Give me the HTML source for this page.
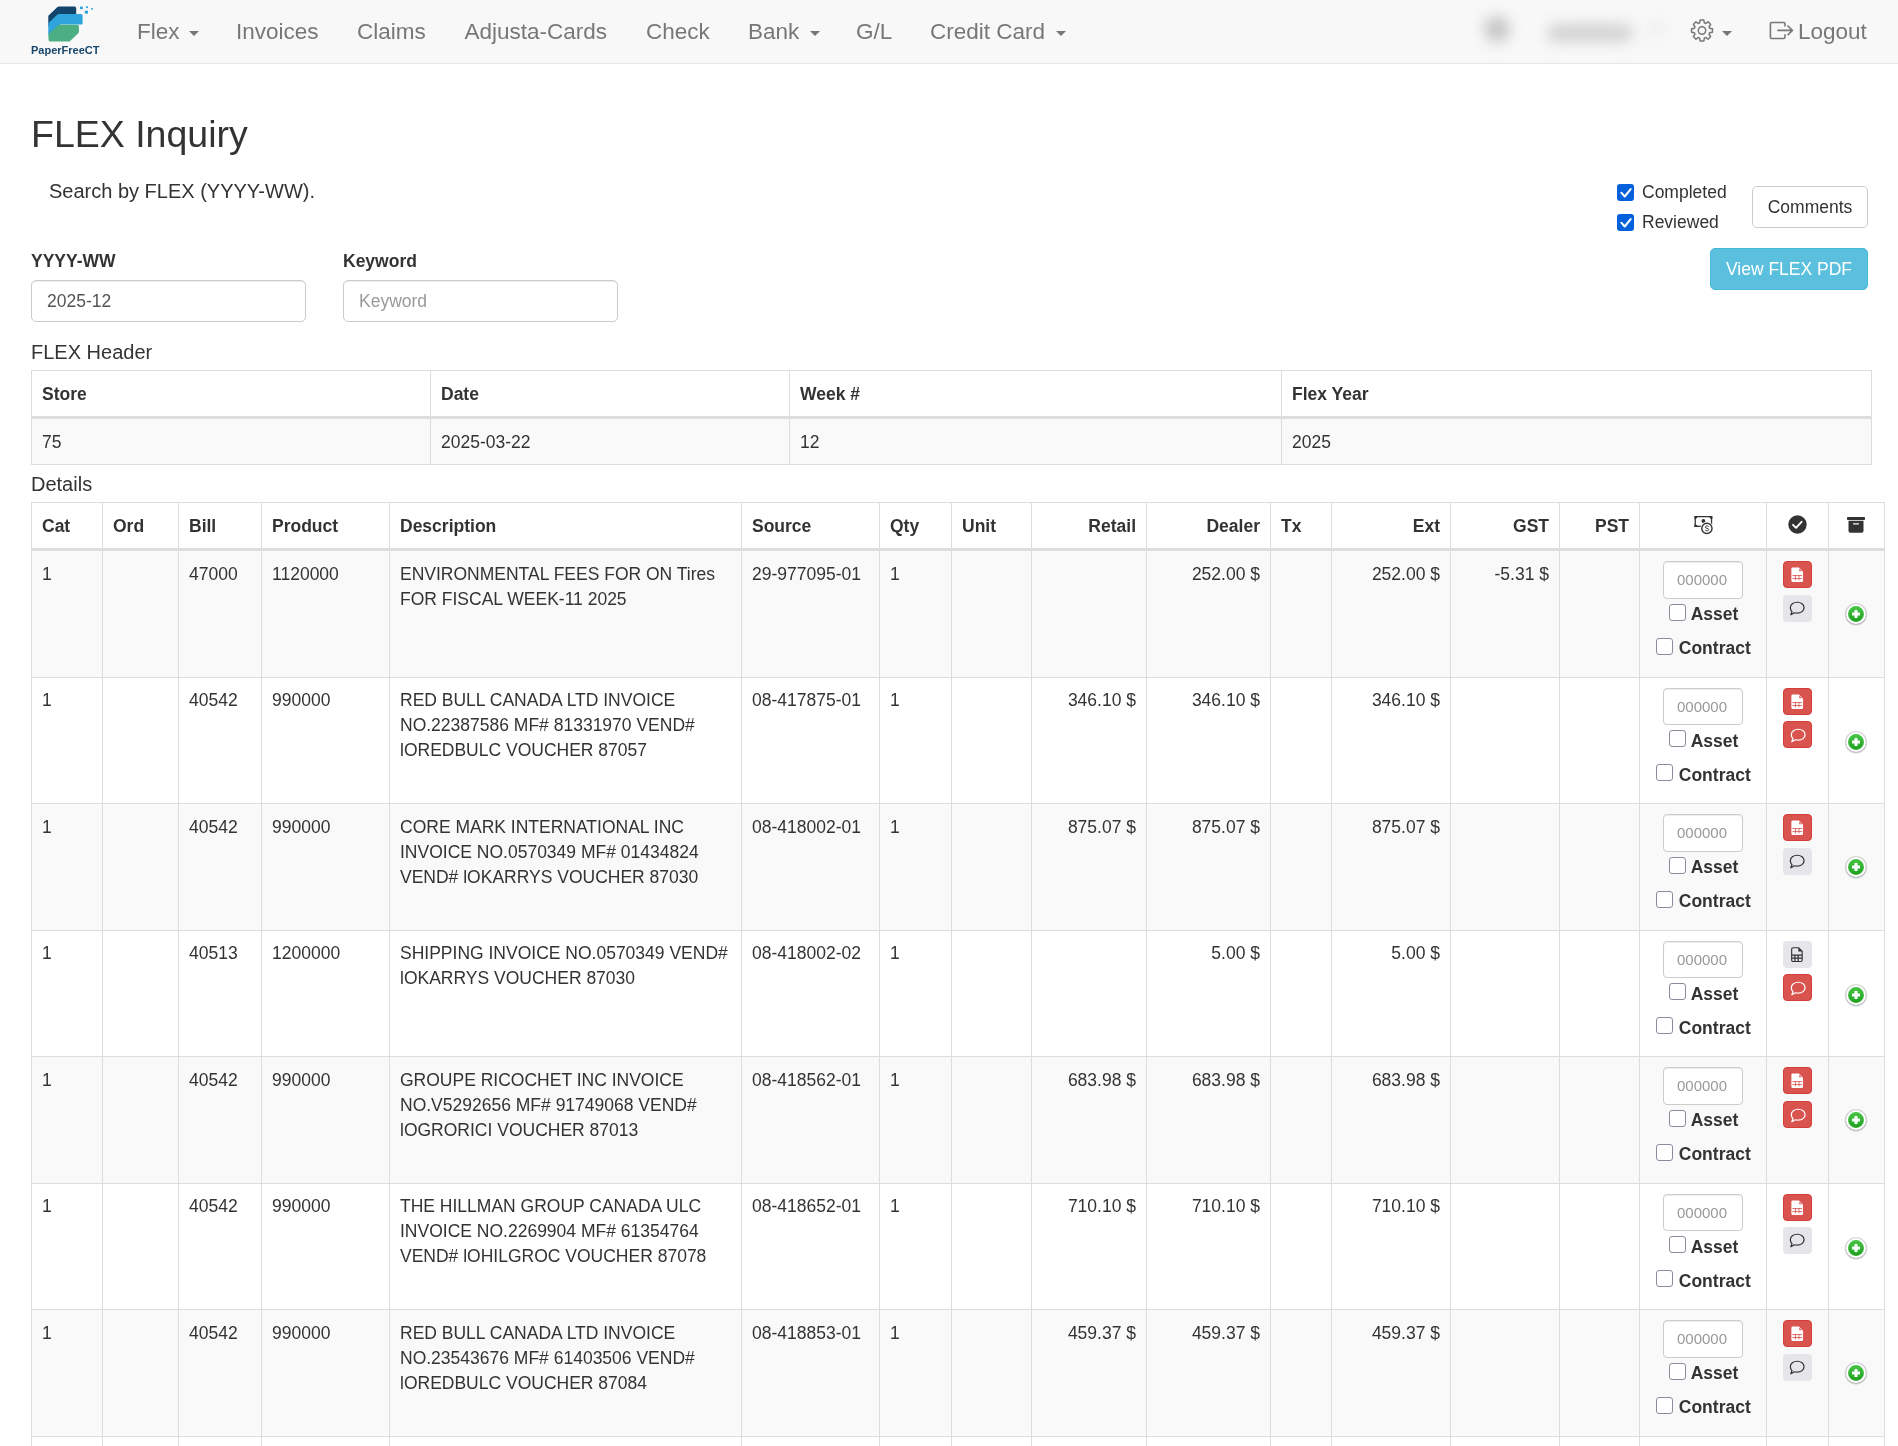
<!DOCTYPE html>
<html><head><meta charset="utf-8">
<style>
*{box-sizing:border-box}
html,body{margin:0;padding:0;background:#fff;width:1898px;height:1446px;overflow:hidden}
body{font-family:"Liberation Sans",sans-serif;color:#333;position:relative;will-change:transform}
.abs{position:absolute;white-space:nowrap}
#nav{position:absolute;left:0;top:0;width:1898px;height:64px;background:#f8f8f8;border-bottom:1px solid #e7e7e7}
.nl{position:absolute;top:0;height:63px;line-height:63px;font-size:22.5px;color:#777;white-space:nowrap}
.caret{display:inline-block;width:0;height:0;border-top:5px solid #777;border-left:5px solid transparent;border-right:5px solid transparent;vertical-align:middle;position:absolute}
h2{position:absolute;margin:0;left:31px;top:114px;font-size:37.5px;font-weight:500;line-height:41px;white-space:nowrap}
.lbl{position:absolute;font-weight:bold;font-size:17.5px;line-height:25px;white-space:nowrap}
.inp{position:absolute;height:42px;border:1px solid #ccc;border-radius:5px;background:#fff;box-shadow:inset 0 1px 1px rgba(0,0,0,.075);font-size:17.5px;line-height:41px;padding-left:15px;color:#555;white-space:nowrap}
table{border-collapse:collapse;position:absolute;table-layout:fixed;font-size:17.5px;line-height:25px}
td,th{border:1px solid #ddd;padding:10px;vertical-align:top;text-align:left;white-space:nowrap;overflow:visible}
thead th{border-bottom:3px solid #ddd;padding-top:11px;padding-bottom:9px}
#ht td{padding-top:11px;padding-bottom:9px}
tbody tr:nth-child(odd){background:#f9f9f9}
.r{text-align:right}
.sec{position:absolute;left:31px;font-size:20px;line-height:28px;white-space:nowrap}
.c{text-align:center}
#dt td{padding-top:11px}
#dt td.x{position:relative;padding:0}
.ic{position:absolute}
#dt th{position:relative}
.ip{position:absolute;left:23px;top:10px;width:79.5px;height:38px;border:1px solid #ccc;border-radius:4px;background:#fff;box-shadow:inset 0 1px 1px rgba(0,0,0,.075);color:#999;font-size:15px;line-height:36px;padding-left:13px}
.cb{position:absolute;width:17px;height:17px;border:1px solid #8b8b9c;border-radius:3px;background:#fff}
.cbl{position:absolute;font-weight:bold;font-size:17.5px;line-height:25px}
.bt{position:absolute;left:15.5px;width:29px;height:27px;border-radius:4px}
.bt.red{background:#d9534f;border:1px solid #d43f3a}
.bt.gray{background:#e6e6ea}
#dt tr.ev td{padding-top:10px}
#dt tr.ev td.x{padding:0}
#dt tr.ev .ip{height:37px;line-height:35px}
#dt tr.ev .cb{margin-top:-1px}
#dt tr.ev .bt+.bt{margin-top:-1px}
#dt tr.ev .ic{margin-top:0.5px}
</style></head><body>
<div id="nav">
  <div class="nl" style="left:137px">Flex<span class="caret" style="left:52px;top:31px"></span></div>
  <div class="nl" style="left:236px">Invoices</div>
  <div class="nl" style="left:357px">Claims</div>
  <div class="nl" style="left:464.5px">Adjusta-Cards</div>
  <div class="nl" style="left:646px">Check</div>
  <div class="nl" style="left:748px">Bank<span class="caret" style="left:61.5px;top:31px"></span></div>
  <div class="nl" style="left:856px">G/L</div>
  <div class="nl" style="left:930px">Credit Card<span class="caret" style="left:125.5px;top:31px"></span></div>
  <div class="nl" style="left:1798px">Logout</div>
  <svg style="position:absolute;left:44px;top:2px" width="52" height="42" viewBox="0 0 52 42">
    <path d="M4.3 13.8l8.9-8.5c.6-.5 1.2-.8 2-.8h15.4a1.6 1.6 0 0 1 1.6 1.6v8.3h-17.2l-10.7 10z" fill="#12456c"/>
    <path d="M4.3 21.3l8.9-8.6c.6-.5 1.2-.8 2-.8h21.8a1.6 1.6 0 0 1 1.6 1.6v7.4c0 .9-.7 1.7-1.6 1.7h-20.8l-11.9 10.8z" fill="#2ea3dc"/>
    <path d="M4.3 32.3l9.6-8.8c.5-.4 1-.7 1.7-.7h17.7a1.6 1.6 0 0 1 1.6 1.6v5.3c0 .6-.2 1.1-.6 1.5l-8.2 7.7c-.4.4-1 .7-1.6.7h-18.3a1.6 1.6 0 0 1-1.6-1.6z" fill="#4caf84"/>
    <rect x="36" y="4.6" width="2.8" height="2.6" fill="#2ea3dc"/>
    <rect x="42" y="4.3" width="1.9" height="1.8" fill="#2ea3dc"/>
    <rect x="47.2" y="6" width="1.7" height="1.6" fill="#2ea3dc"/>
    <rect x="40.8" y="8.7" width="3.2" height="2.9" fill="#2ea3dc"/>
  </svg>
  <div style="position:absolute;left:31px;top:42.5px;font-size:11px;line-height:14px;font-weight:bold;color:#17476c;letter-spacing:0;white-space:nowrap">PaperFreeCT</div>
  <div style="position:absolute;left:1465px;top:0px;width:230px;height:63px;filter:blur(7px)">
    <div style="position:absolute;left:19px;top:16px;width:26px;height:26px;border-radius:50%;background:#c6c6c6"></div>
    <div style="position:absolute;left:55px;top:21px;width:26px;height:10px;border-radius:5px;background:#fafafa"></div>
    <div style="position:absolute;left:82px;top:24px;width:86px;height:18px;border-radius:9px;background:#d2d2d2"></div>
    <div style="position:absolute;left:184px;top:22px;width:16px;height:14px;border-radius:7px;background:#ececec"></div>
  </div>
  <svg style="position:absolute;left:1689px;top:18px" width="26" height="25" viewBox="0 0 26 25"><path d="M10.66 4.85L11.16 2.06L14.84 2.06L15.34 4.85L16.76 5.44L19.08 3.82L21.68 6.42L20.06 8.74L20.65 10.16L23.44 10.66L23.44 14.34L20.65 14.84L20.06 16.26L21.68 18.58L19.08 21.18L16.76 19.56L15.34 20.15L14.84 22.94L11.16 22.94L10.66 20.15L9.24 19.56L6.92 21.18L4.32 18.58L5.94 16.26L5.35 14.84L2.56 14.34L2.56 10.66L5.35 10.16L5.94 8.74L4.32 6.42L6.92 3.82L9.24 5.44Z" fill="none" stroke="#777" stroke-width="1.5" stroke-linejoin="round"/><circle cx="13" cy="12.5" r="3.7" fill="none" stroke="#777" stroke-width="1.5"/></svg>
  <span class="caret" style="left:1721.7px;top:31px"></span>
  <svg style="position:absolute;left:1768px;top:20px" width="26" height="21" viewBox="0 0 26 21"><path d="M17 6.5v-2.6a1.4 1.4 0 0 0-1.4-1.4h-11.8a1.4 1.4 0 0 0-1.4 1.4v13.2a1.4 1.4 0 0 0 1.4 1.4h11.8a1.4 1.4 0 0 0 1.4-1.4v-2.8" fill="none" stroke="#777" stroke-width="1.6"/><path d="M9.3 10.4h15M19.5 5.5l4.9 4.9-4.9 4.9" fill="none" stroke="#777" stroke-width="1.6"/></svg>

</div>
<h2>FLEX Inquiry</h2>
<div class="abs" style="left:49px;top:177px;font-size:20px;line-height:28px">Search by FLEX (YYYY-WW).</div>
<div class="lbl" style="left:31px;top:249px">YYYY-WW</div>
<div class="inp" style="left:31px;top:280px;width:275px">2025-12</div>
<div class="lbl" style="left:343px;top:249px">Keyword</div>
<div class="inp" style="left:343px;top:280px;width:275px;color:#999">Keyword</div>


<div style="position:absolute;left:1617px;top:184px;width:17px;height:17px;border-radius:3px;background:#0560dc"><svg width="17" height="17" viewBox="0 0 17 17" style="position:absolute;left:0;top:0"><path d="M4.3 8.7l3.4 3.8 6-7.4" fill="none" stroke="#fff" stroke-width="2" stroke-linecap="round" stroke-linejoin="round"/></svg></div>
<div style="position:absolute;left:1617px;top:214px;width:17px;height:17px;border-radius:3px;background:#0560dc"><svg width="17" height="17" viewBox="0 0 17 17" style="position:absolute;left:0;top:0"><path d="M4.3 8.7l3.4 3.8 6-7.4" fill="none" stroke="#fff" stroke-width="2" stroke-linecap="round" stroke-linejoin="round"/></svg></div>
<div class="abs" style="left:1642px;top:180px;font-size:17.5px;line-height:25px">Completed</div>
<div class="abs" style="left:1642px;top:210px;font-size:17.5px;line-height:25px">Reviewed</div>
<div class="abs" style="left:1752px;top:186px;width:116px;height:41.5px;border:1px solid #ccc;border-radius:5px;background:#fff;font-size:17.5px;line-height:41px;text-align:center;color:#333">Comments</div>
<div class="abs" style="left:1710px;top:248.3px;width:158px;height:41.5px;border:1px solid #46b8da;border-radius:5px;background:#5bc0de;font-size:17.5px;line-height:41px;text-align:center;color:#fff">View FLEX PDF</div>
<div class="sec" style="top:338px">FLEX Header</div>
<div class="sec" style="top:470px">Details</div>

<table id="ht" style="left:31px;top:370px;width:1840px">
<colgroup><col style="width:399px"><col style="width:359px"><col style="width:492px"><col style="width:590px"></colgroup>
<thead><tr><th>Store</th><th>Date</th><th>Week #</th><th>Flex Year</th></tr></thead>
<tbody><tr><td>75</td><td>2025-03-22</td><td>12</td><td>2025</td></tr></tbody>
</table>

<!--DT-->
<table id="dt" style="left:31px;top:502px;width:1853px">
<colgroup><col style="width:71px"><col style="width:76px"><col style="width:83px"><col style="width:128px"><col style="width:352px"><col style="width:138px"><col style="width:72px"><col style="width:80px"><col style="width:115px"><col style="width:124px"><col style="width:61px"><col style="width:119px"><col style="width:109px"><col style="width:80px"><col style="width:127px"><col style="width:62px"><col style="width:56px"></colgroup>
<thead><tr>
<th>Cat</th>
<th>Ord</th>
<th>Bill</th>
<th>Product</th>
<th>Description</th>
<th>Source</th>
<th>Qty</th>
<th>Unit</th>
<th class="r">Retail</th>
<th class="r">Dealer</th>
<th>Tx</th>
<th class="r">Ext</th>
<th class="r">GST</th>
<th class="r">PST</th>
<th class="c"><svg class="ic" style="left:53.5px;top:11.5px" width="22" height="22" viewBox="0 0 22 22"><defs><clipPath id="bc"><rect x="0.4" y="1" width="18" height="11.1"/></clipPath></defs><g clip-path="url(#bc)"><rect x="1.15" y="1.5" width="16.5" height="9.9" fill="none" stroke="#333" stroke-width="1.5"/><circle cx="0.6" cy="1" r="2.9" fill="#333"/><circle cx="18.2" cy="1" r="2.9" fill="#333"/><circle cx="0.6" cy="12.1" r="2.9" fill="#333"/></g><circle cx="9.4" cy="6" r="1.9" fill="#333"/><circle cx="12.9" cy="13.4" r="6.6" fill="#fff"/><circle cx="12.9" cy="13.4" r="5.1" fill="#fff" stroke="#333" stroke-width="1.4"/><path d="M14.6 11.6c-.4-.5-1-.7-1.7-.7-.9 0-1.6.5-1.6 1.2 0 1.5 3.4.9 3.4 2.5 0 .7-.7 1.2-1.7 1.2-.8 0-1.4-.3-1.8-.8" fill="none" stroke="#333" stroke-width="0.95"/></svg></th>
<th class="c"><svg class="ic" style="left:21px;top:12.2px" width="19" height="19" viewBox="0 0 19 19"><circle cx="9.5" cy="9.5" r="9.2" fill="#333"/><path d="M5 9.8l3 3 5.6-6" fill="none" stroke="#fff" stroke-width="1.9" stroke-linecap="round" stroke-linejoin="round"/></svg></th>
<th class="c"><svg class="ic" style="left:17.5px;top:13px" width="19" height="17" viewBox="0 0 19 17"><rect x="0" y="1" width="18" height="3" rx="0.8" fill="#333"/><path d="M1.5 4.8h15v10.2a1.8 1.8 0 0 1-1.8 1.8h-11.4a1.8 1.8 0 0 1-1.8-1.8z" fill="#333"/><rect x="6" y="7.2" width="6" height="1.3" rx="0.6" fill="#fff"/></svg></th>
</tr></thead><tbody>
<tr style="height:128px">
<td>1</td>
<td></td>
<td>47000</td>
<td>1120000</td>
<td>ENVIRONMENTAL FEES FOR ON Tires<br>FOR FISCAL WEEK-11 2025</td>
<td>29-977095-01</td>
<td>1</td>
<td></td>
<td class="r"></td>
<td class="r">252.00 $</td>
<td></td>
<td class="r">252.00 $</td>
<td class="r">-5.31 $</td>
<td class="r"></td>
<td class="x"><div class="ip">000000</div><div class="cb" style="left:28.7px;top:53px"></div><div class="cbl" style="left:50.7px;top:51px">Asset</div><div class="cb" style="left:16.3px;top:87px"></div><div class="cbl" style="left:38.8px;top:85px">Contract</div></td>
<td class="x"><div class="bt red" style="top:10px"><svg width="12.5" height="15.4" viewBox="0 0 13 16" style="position:absolute;left:7.6px;top:5.1px"><path d="M1.8 0.6h6.4l4.3 4.3v9.3a1.4 1.4 0 0 1-1.4 1.4h-9.3a1.4 1.4 0 0 1-1.4-1.4v-12.2a1.4 1.4 0 0 1 1.4-1.4z" fill="#fff"/><path d="M8.6 1.8l2.7 2.7h-2.7z" fill="#d9534f"/><path d="M1.4 8.9h10.2M1.4 12h10.2M4.6 8.3v5.6M8.3 8.3v5.6" stroke="#d9534f" stroke-width="0.85"/></svg></div><div class="bt gray" style="top:44px"><svg width="16.5" height="15.5" viewBox="0 0 16 15" style="position:absolute;left:6px;top:6px"><path d="M8 1.2c3.6 0 6.6 2.3 6.6 5.3s-3 5.3-6.6 5.3c-.9 0-1.8-.15-2.6-.4l-3.6 1.9 1.1-2.9c-1-.95-1.6-2.2-1.6-3.9 0-3 3-5.3 6.7-5.3z" fill="none" stroke="#333" stroke-width="1.2" stroke-linejoin="round"/></svg></div></td>
<td class="x"><svg class="ic" style="left:15.4px;top:51.3px" width="24" height="24" viewBox="0 0 23 23"><defs><linearGradient id="gg" x1="0" y1="0" x2="0" y2="1"><stop offset="0" stop-color="#47c447"/><stop offset="1" stop-color="#1fa11f"/></linearGradient><radialGradient id="sh"><stop offset="0.75" stop-color="#000" stop-opacity="0.42"/><stop offset="1" stop-color="#000" stop-opacity="0"/></radialGradient></defs><circle cx="11.5" cy="11.8" r="11.3" fill="url(#sh)"/><circle cx="11.5" cy="11.5" r="9.6" fill="#fff"/><circle cx="11.5" cy="11.5" r="7.6" fill="url(#gg)"/><path d="M11.5 7.7v7.6M7.7 11.5h7.6" stroke="#fff" stroke-width="2.8"/></svg></td>
</tr>
<tr style="height:126px" class="ev">
<td>1</td>
<td></td>
<td>40542</td>
<td>990000</td>
<td>RED BULL CANADA LTD INVOICE<br>NO.22387586 MF# 81331970 VEND#<br>lOREDBULC VOUCHER 87057</td>
<td>08-417875-01</td>
<td>1</td>
<td></td>
<td class="r">346.10 $</td>
<td class="r">346.10 $</td>
<td></td>
<td class="r">346.10 $</td>
<td class="r"></td>
<td class="r"></td>
<td class="x"><div class="ip">000000</div><div class="cb" style="left:28.7px;top:53px"></div><div class="cbl" style="left:50.7px;top:51px">Asset</div><div class="cb" style="left:16.3px;top:87px"></div><div class="cbl" style="left:38.8px;top:85px">Contract</div></td>
<td class="x"><div class="bt red" style="top:10px"><svg width="12.5" height="15.4" viewBox="0 0 13 16" style="position:absolute;left:7.6px;top:5.1px"><path d="M1.8 0.6h6.4l4.3 4.3v9.3a1.4 1.4 0 0 1-1.4 1.4h-9.3a1.4 1.4 0 0 1-1.4-1.4v-12.2a1.4 1.4 0 0 1 1.4-1.4z" fill="#fff"/><path d="M8.6 1.8l2.7 2.7h-2.7z" fill="#d9534f"/><path d="M1.4 8.9h10.2M1.4 12h10.2M4.6 8.3v5.6M8.3 8.3v5.6" stroke="#d9534f" stroke-width="0.85"/></svg></div><div class="bt red" style="top:44px"><svg width="16.5" height="15.5" viewBox="0 0 16 15" style="position:absolute;left:6px;top:6px"><path d="M8 1.2c3.6 0 6.6 2.3 6.6 5.3s-3 5.3-6.6 5.3c-.9 0-1.8-.15-2.6-.4l-3.6 1.9 1.1-2.9c-1-.95-1.6-2.2-1.6-3.9 0-3 3-5.3 6.7-5.3z" fill="none" stroke="#fff" stroke-width="1.2" stroke-linejoin="round"/></svg></div></td>
<td class="x"><svg class="ic" style="left:15.4px;top:51.3px" width="24" height="24" viewBox="0 0 23 23"><defs><linearGradient id="gg" x1="0" y1="0" x2="0" y2="1"><stop offset="0" stop-color="#47c447"/><stop offset="1" stop-color="#1fa11f"/></linearGradient><radialGradient id="sh"><stop offset="0.75" stop-color="#000" stop-opacity="0.42"/><stop offset="1" stop-color="#000" stop-opacity="0"/></radialGradient></defs><circle cx="11.5" cy="11.8" r="11.3" fill="url(#sh)"/><circle cx="11.5" cy="11.5" r="9.6" fill="#fff"/><circle cx="11.5" cy="11.5" r="7.6" fill="url(#gg)"/><path d="M11.5 7.7v7.6M7.7 11.5h7.6" stroke="#fff" stroke-width="2.8"/></svg></td>
</tr>
<tr style="height:127px">
<td>1</td>
<td></td>
<td>40542</td>
<td>990000</td>
<td>CORE MARK INTERNATIONAL INC<br>INVOICE NO.0570349 MF# 01434824<br>VEND# lOKARRYS VOUCHER 87030</td>
<td>08-418002-01</td>
<td>1</td>
<td></td>
<td class="r">875.07 $</td>
<td class="r">875.07 $</td>
<td></td>
<td class="r">875.07 $</td>
<td class="r"></td>
<td class="r"></td>
<td class="x"><div class="ip">000000</div><div class="cb" style="left:28.7px;top:53px"></div><div class="cbl" style="left:50.7px;top:51px">Asset</div><div class="cb" style="left:16.3px;top:87px"></div><div class="cbl" style="left:38.8px;top:85px">Contract</div></td>
<td class="x"><div class="bt red" style="top:10px"><svg width="12.5" height="15.4" viewBox="0 0 13 16" style="position:absolute;left:7.6px;top:5.1px"><path d="M1.8 0.6h6.4l4.3 4.3v9.3a1.4 1.4 0 0 1-1.4 1.4h-9.3a1.4 1.4 0 0 1-1.4-1.4v-12.2a1.4 1.4 0 0 1 1.4-1.4z" fill="#fff"/><path d="M8.6 1.8l2.7 2.7h-2.7z" fill="#d9534f"/><path d="M1.4 8.9h10.2M1.4 12h10.2M4.6 8.3v5.6M8.3 8.3v5.6" stroke="#d9534f" stroke-width="0.85"/></svg></div><div class="bt gray" style="top:44px"><svg width="16.5" height="15.5" viewBox="0 0 16 15" style="position:absolute;left:6px;top:6px"><path d="M8 1.2c3.6 0 6.6 2.3 6.6 5.3s-3 5.3-6.6 5.3c-.9 0-1.8-.15-2.6-.4l-3.6 1.9 1.1-2.9c-1-.95-1.6-2.2-1.6-3.9 0-3 3-5.3 6.7-5.3z" fill="none" stroke="#333" stroke-width="1.2" stroke-linejoin="round"/></svg></div></td>
<td class="x"><svg class="ic" style="left:15.4px;top:51.3px" width="24" height="24" viewBox="0 0 23 23"><defs><linearGradient id="gg" x1="0" y1="0" x2="0" y2="1"><stop offset="0" stop-color="#47c447"/><stop offset="1" stop-color="#1fa11f"/></linearGradient><radialGradient id="sh"><stop offset="0.75" stop-color="#000" stop-opacity="0.42"/><stop offset="1" stop-color="#000" stop-opacity="0"/></radialGradient></defs><circle cx="11.5" cy="11.8" r="11.3" fill="url(#sh)"/><circle cx="11.5" cy="11.5" r="9.6" fill="#fff"/><circle cx="11.5" cy="11.5" r="7.6" fill="url(#gg)"/><path d="M11.5 7.7v7.6M7.7 11.5h7.6" stroke="#fff" stroke-width="2.8"/></svg></td>
</tr>
<tr style="height:126px" class="ev">
<td>1</td>
<td></td>
<td>40513</td>
<td>1200000</td>
<td>SHIPPING INVOICE NO.0570349 VEND#<br>lOKARRYS VOUCHER 87030</td>
<td>08-418002-02</td>
<td>1</td>
<td></td>
<td class="r"></td>
<td class="r">5.00 $</td>
<td></td>
<td class="r">5.00 $</td>
<td class="r"></td>
<td class="r"></td>
<td class="x"><div class="ip">000000</div><div class="cb" style="left:28.7px;top:53px"></div><div class="cbl" style="left:50.7px;top:51px">Asset</div><div class="cb" style="left:16.3px;top:87px"></div><div class="cbl" style="left:38.8px;top:85px">Contract</div></td>
<td class="x"><div class="bt gray" style="top:10px"><svg width="12.4" height="15.3" viewBox="0 0 13 16" style="position:absolute;left:8.9px;top:6.1px"><path d="M2.2 0.8h5.8l3.7 3.7v9.2a1.5 1.5 0 0 1-1.5 1.5h-8a1.5 1.5 0 0 1-1.5-1.5v-11.4a1.5 1.5 0 0 1 1.5-1.5z" fill="none" stroke="#333" stroke-width="1.2"/><path d="M7.7 0.8v4h4z" fill="#333"/><path d="M0.9 8.6h10.8M0.9 11.6h10.8M4.1 8v7.2M7.5 8v7.2" stroke="#333" stroke-width="1.3"/></svg></div><div class="bt red" style="top:44px"><svg width="16.5" height="15.5" viewBox="0 0 16 15" style="position:absolute;left:6px;top:6px"><path d="M8 1.2c3.6 0 6.6 2.3 6.6 5.3s-3 5.3-6.6 5.3c-.9 0-1.8-.15-2.6-.4l-3.6 1.9 1.1-2.9c-1-.95-1.6-2.2-1.6-3.9 0-3 3-5.3 6.7-5.3z" fill="none" stroke="#fff" stroke-width="1.2" stroke-linejoin="round"/></svg></div></td>
<td class="x"><svg class="ic" style="left:15.4px;top:51.3px" width="24" height="24" viewBox="0 0 23 23"><defs><linearGradient id="gg" x1="0" y1="0" x2="0" y2="1"><stop offset="0" stop-color="#47c447"/><stop offset="1" stop-color="#1fa11f"/></linearGradient><radialGradient id="sh"><stop offset="0.75" stop-color="#000" stop-opacity="0.42"/><stop offset="1" stop-color="#000" stop-opacity="0"/></radialGradient></defs><circle cx="11.5" cy="11.8" r="11.3" fill="url(#sh)"/><circle cx="11.5" cy="11.5" r="9.6" fill="#fff"/><circle cx="11.5" cy="11.5" r="7.6" fill="url(#gg)"/><path d="M11.5 7.7v7.6M7.7 11.5h7.6" stroke="#fff" stroke-width="2.8"/></svg></td>
</tr>
<tr style="height:127px">
<td>1</td>
<td></td>
<td>40542</td>
<td>990000</td>
<td>GROUPE RICOCHET INC INVOICE<br>NO.V5292656 MF# 91749068 VEND#<br>lOGRORICI VOUCHER 87013</td>
<td>08-418562-01</td>
<td>1</td>
<td></td>
<td class="r">683.98 $</td>
<td class="r">683.98 $</td>
<td></td>
<td class="r">683.98 $</td>
<td class="r"></td>
<td class="r"></td>
<td class="x"><div class="ip">000000</div><div class="cb" style="left:28.7px;top:53px"></div><div class="cbl" style="left:50.7px;top:51px">Asset</div><div class="cb" style="left:16.3px;top:87px"></div><div class="cbl" style="left:38.8px;top:85px">Contract</div></td>
<td class="x"><div class="bt red" style="top:10px"><svg width="12.5" height="15.4" viewBox="0 0 13 16" style="position:absolute;left:7.6px;top:5.1px"><path d="M1.8 0.6h6.4l4.3 4.3v9.3a1.4 1.4 0 0 1-1.4 1.4h-9.3a1.4 1.4 0 0 1-1.4-1.4v-12.2a1.4 1.4 0 0 1 1.4-1.4z" fill="#fff"/><path d="M8.6 1.8l2.7 2.7h-2.7z" fill="#d9534f"/><path d="M1.4 8.9h10.2M1.4 12h10.2M4.6 8.3v5.6M8.3 8.3v5.6" stroke="#d9534f" stroke-width="0.85"/></svg></div><div class="bt red" style="top:44px"><svg width="16.5" height="15.5" viewBox="0 0 16 15" style="position:absolute;left:6px;top:6px"><path d="M8 1.2c3.6 0 6.6 2.3 6.6 5.3s-3 5.3-6.6 5.3c-.9 0-1.8-.15-2.6-.4l-3.6 1.9 1.1-2.9c-1-.95-1.6-2.2-1.6-3.9 0-3 3-5.3 6.7-5.3z" fill="none" stroke="#fff" stroke-width="1.2" stroke-linejoin="round"/></svg></div></td>
<td class="x"><svg class="ic" style="left:15.4px;top:51.3px" width="24" height="24" viewBox="0 0 23 23"><defs><linearGradient id="gg" x1="0" y1="0" x2="0" y2="1"><stop offset="0" stop-color="#47c447"/><stop offset="1" stop-color="#1fa11f"/></linearGradient><radialGradient id="sh"><stop offset="0.75" stop-color="#000" stop-opacity="0.42"/><stop offset="1" stop-color="#000" stop-opacity="0"/></radialGradient></defs><circle cx="11.5" cy="11.8" r="11.3" fill="url(#sh)"/><circle cx="11.5" cy="11.5" r="9.6" fill="#fff"/><circle cx="11.5" cy="11.5" r="7.6" fill="url(#gg)"/><path d="M11.5 7.7v7.6M7.7 11.5h7.6" stroke="#fff" stroke-width="2.8"/></svg></td>
</tr>
<tr style="height:126px" class="ev">
<td>1</td>
<td></td>
<td>40542</td>
<td>990000</td>
<td>THE HILLMAN GROUP CANADA ULC<br>INVOICE NO.2269904 MF# 61354764<br>VEND# lOHILGROC VOUCHER 87078</td>
<td>08-418652-01</td>
<td>1</td>
<td></td>
<td class="r">710.10 $</td>
<td class="r">710.10 $</td>
<td></td>
<td class="r">710.10 $</td>
<td class="r"></td>
<td class="r"></td>
<td class="x"><div class="ip">000000</div><div class="cb" style="left:28.7px;top:53px"></div><div class="cbl" style="left:50.7px;top:51px">Asset</div><div class="cb" style="left:16.3px;top:87px"></div><div class="cbl" style="left:38.8px;top:85px">Contract</div></td>
<td class="x"><div class="bt red" style="top:10px"><svg width="12.5" height="15.4" viewBox="0 0 13 16" style="position:absolute;left:7.6px;top:5.1px"><path d="M1.8 0.6h6.4l4.3 4.3v9.3a1.4 1.4 0 0 1-1.4 1.4h-9.3a1.4 1.4 0 0 1-1.4-1.4v-12.2a1.4 1.4 0 0 1 1.4-1.4z" fill="#fff"/><path d="M8.6 1.8l2.7 2.7h-2.7z" fill="#d9534f"/><path d="M1.4 8.9h10.2M1.4 12h10.2M4.6 8.3v5.6M8.3 8.3v5.6" stroke="#d9534f" stroke-width="0.85"/></svg></div><div class="bt gray" style="top:44px"><svg width="16.5" height="15.5" viewBox="0 0 16 15" style="position:absolute;left:6px;top:6px"><path d="M8 1.2c3.6 0 6.6 2.3 6.6 5.3s-3 5.3-6.6 5.3c-.9 0-1.8-.15-2.6-.4l-3.6 1.9 1.1-2.9c-1-.95-1.6-2.2-1.6-3.9 0-3 3-5.3 6.7-5.3z" fill="none" stroke="#333" stroke-width="1.2" stroke-linejoin="round"/></svg></div></td>
<td class="x"><svg class="ic" style="left:15.4px;top:51.3px" width="24" height="24" viewBox="0 0 23 23"><defs><linearGradient id="gg" x1="0" y1="0" x2="0" y2="1"><stop offset="0" stop-color="#47c447"/><stop offset="1" stop-color="#1fa11f"/></linearGradient><radialGradient id="sh"><stop offset="0.75" stop-color="#000" stop-opacity="0.42"/><stop offset="1" stop-color="#000" stop-opacity="0"/></radialGradient></defs><circle cx="11.5" cy="11.8" r="11.3" fill="url(#sh)"/><circle cx="11.5" cy="11.5" r="9.6" fill="#fff"/><circle cx="11.5" cy="11.5" r="7.6" fill="url(#gg)"/><path d="M11.5 7.7v7.6M7.7 11.5h7.6" stroke="#fff" stroke-width="2.8"/></svg></td>
</tr>
<tr style="height:127px">
<td>1</td>
<td></td>
<td>40542</td>
<td>990000</td>
<td>RED BULL CANADA LTD INVOICE<br>NO.23543676 MF# 61403506 VEND#<br>lOREDBULC VOUCHER 87084</td>
<td>08-418853-01</td>
<td>1</td>
<td></td>
<td class="r">459.37 $</td>
<td class="r">459.37 $</td>
<td></td>
<td class="r">459.37 $</td>
<td class="r"></td>
<td class="r"></td>
<td class="x"><div class="ip">000000</div><div class="cb" style="left:28.7px;top:53px"></div><div class="cbl" style="left:50.7px;top:51px">Asset</div><div class="cb" style="left:16.3px;top:87px"></div><div class="cbl" style="left:38.8px;top:85px">Contract</div></td>
<td class="x"><div class="bt red" style="top:10px"><svg width="12.5" height="15.4" viewBox="0 0 13 16" style="position:absolute;left:7.6px;top:5.1px"><path d="M1.8 0.6h6.4l4.3 4.3v9.3a1.4 1.4 0 0 1-1.4 1.4h-9.3a1.4 1.4 0 0 1-1.4-1.4v-12.2a1.4 1.4 0 0 1 1.4-1.4z" fill="#fff"/><path d="M8.6 1.8l2.7 2.7h-2.7z" fill="#d9534f"/><path d="M1.4 8.9h10.2M1.4 12h10.2M4.6 8.3v5.6M8.3 8.3v5.6" stroke="#d9534f" stroke-width="0.85"/></svg></div><div class="bt gray" style="top:44px"><svg width="16.5" height="15.5" viewBox="0 0 16 15" style="position:absolute;left:6px;top:6px"><path d="M8 1.2c3.6 0 6.6 2.3 6.6 5.3s-3 5.3-6.6 5.3c-.9 0-1.8-.15-2.6-.4l-3.6 1.9 1.1-2.9c-1-.95-1.6-2.2-1.6-3.9 0-3 3-5.3 6.7-5.3z" fill="none" stroke="#333" stroke-width="1.2" stroke-linejoin="round"/></svg></div></td>
<td class="x"><svg class="ic" style="left:15.4px;top:51.3px" width="24" height="24" viewBox="0 0 23 23"><defs><linearGradient id="gg" x1="0" y1="0" x2="0" y2="1"><stop offset="0" stop-color="#47c447"/><stop offset="1" stop-color="#1fa11f"/></linearGradient><radialGradient id="sh"><stop offset="0.75" stop-color="#000" stop-opacity="0.42"/><stop offset="1" stop-color="#000" stop-opacity="0"/></radialGradient></defs><circle cx="11.5" cy="11.8" r="11.3" fill="url(#sh)"/><circle cx="11.5" cy="11.5" r="9.6" fill="#fff"/><circle cx="11.5" cy="11.5" r="7.6" fill="url(#gg)"/><path d="M11.5 7.7v7.6M7.7 11.5h7.6" stroke="#fff" stroke-width="2.8"/></svg></td>
</tr>
<tr style="height:126px" class="ev">
<td></td>
<td></td>
<td></td>
<td></td>
<td></td>
<td></td>
<td></td>
<td></td>
<td class="r"></td>
<td class="r"></td>
<td></td>
<td class="r"></td>
<td class="r"></td>
<td class="r"></td>
<td class="x"><div class="ip">000000</div><div class="cb" style="left:28.7px;top:53px"></div><div class="cbl" style="left:50.7px;top:51px">Asset</div><div class="cb" style="left:16.3px;top:87px"></div><div class="cbl" style="left:38.8px;top:85px">Contract</div></td>
<td class="x"><div class="bt red" style="top:10px"><svg width="12.5" height="15.4" viewBox="0 0 13 16" style="position:absolute;left:7.6px;top:5.1px"><path d="M1.8 0.6h6.4l4.3 4.3v9.3a1.4 1.4 0 0 1-1.4 1.4h-9.3a1.4 1.4 0 0 1-1.4-1.4v-12.2a1.4 1.4 0 0 1 1.4-1.4z" fill="#fff"/><path d="M8.6 1.8l2.7 2.7h-2.7z" fill="#d9534f"/><path d="M1.4 8.9h10.2M1.4 12h10.2M4.6 8.3v5.6M8.3 8.3v5.6" stroke="#d9534f" stroke-width="0.85"/></svg></div><div class="bt gray" style="top:44px"><svg width="16.5" height="15.5" viewBox="0 0 16 15" style="position:absolute;left:6px;top:6px"><path d="M8 1.2c3.6 0 6.6 2.3 6.6 5.3s-3 5.3-6.6 5.3c-.9 0-1.8-.15-2.6-.4l-3.6 1.9 1.1-2.9c-1-.95-1.6-2.2-1.6-3.9 0-3 3-5.3 6.7-5.3z" fill="none" stroke="#333" stroke-width="1.2" stroke-linejoin="round"/></svg></div></td>
<td class="x"><svg class="ic" style="left:15.4px;top:51.3px" width="24" height="24" viewBox="0 0 23 23"><defs><linearGradient id="gg" x1="0" y1="0" x2="0" y2="1"><stop offset="0" stop-color="#47c447"/><stop offset="1" stop-color="#1fa11f"/></linearGradient><radialGradient id="sh"><stop offset="0.75" stop-color="#000" stop-opacity="0.42"/><stop offset="1" stop-color="#000" stop-opacity="0"/></radialGradient></defs><circle cx="11.5" cy="11.8" r="11.3" fill="url(#sh)"/><circle cx="11.5" cy="11.5" r="9.6" fill="#fff"/><circle cx="11.5" cy="11.5" r="7.6" fill="url(#gg)"/><path d="M11.5 7.7v7.6M7.7 11.5h7.6" stroke="#fff" stroke-width="2.8"/></svg></td>
</tr>
</tbody></table>
<!--/DT-->
</body></html>
